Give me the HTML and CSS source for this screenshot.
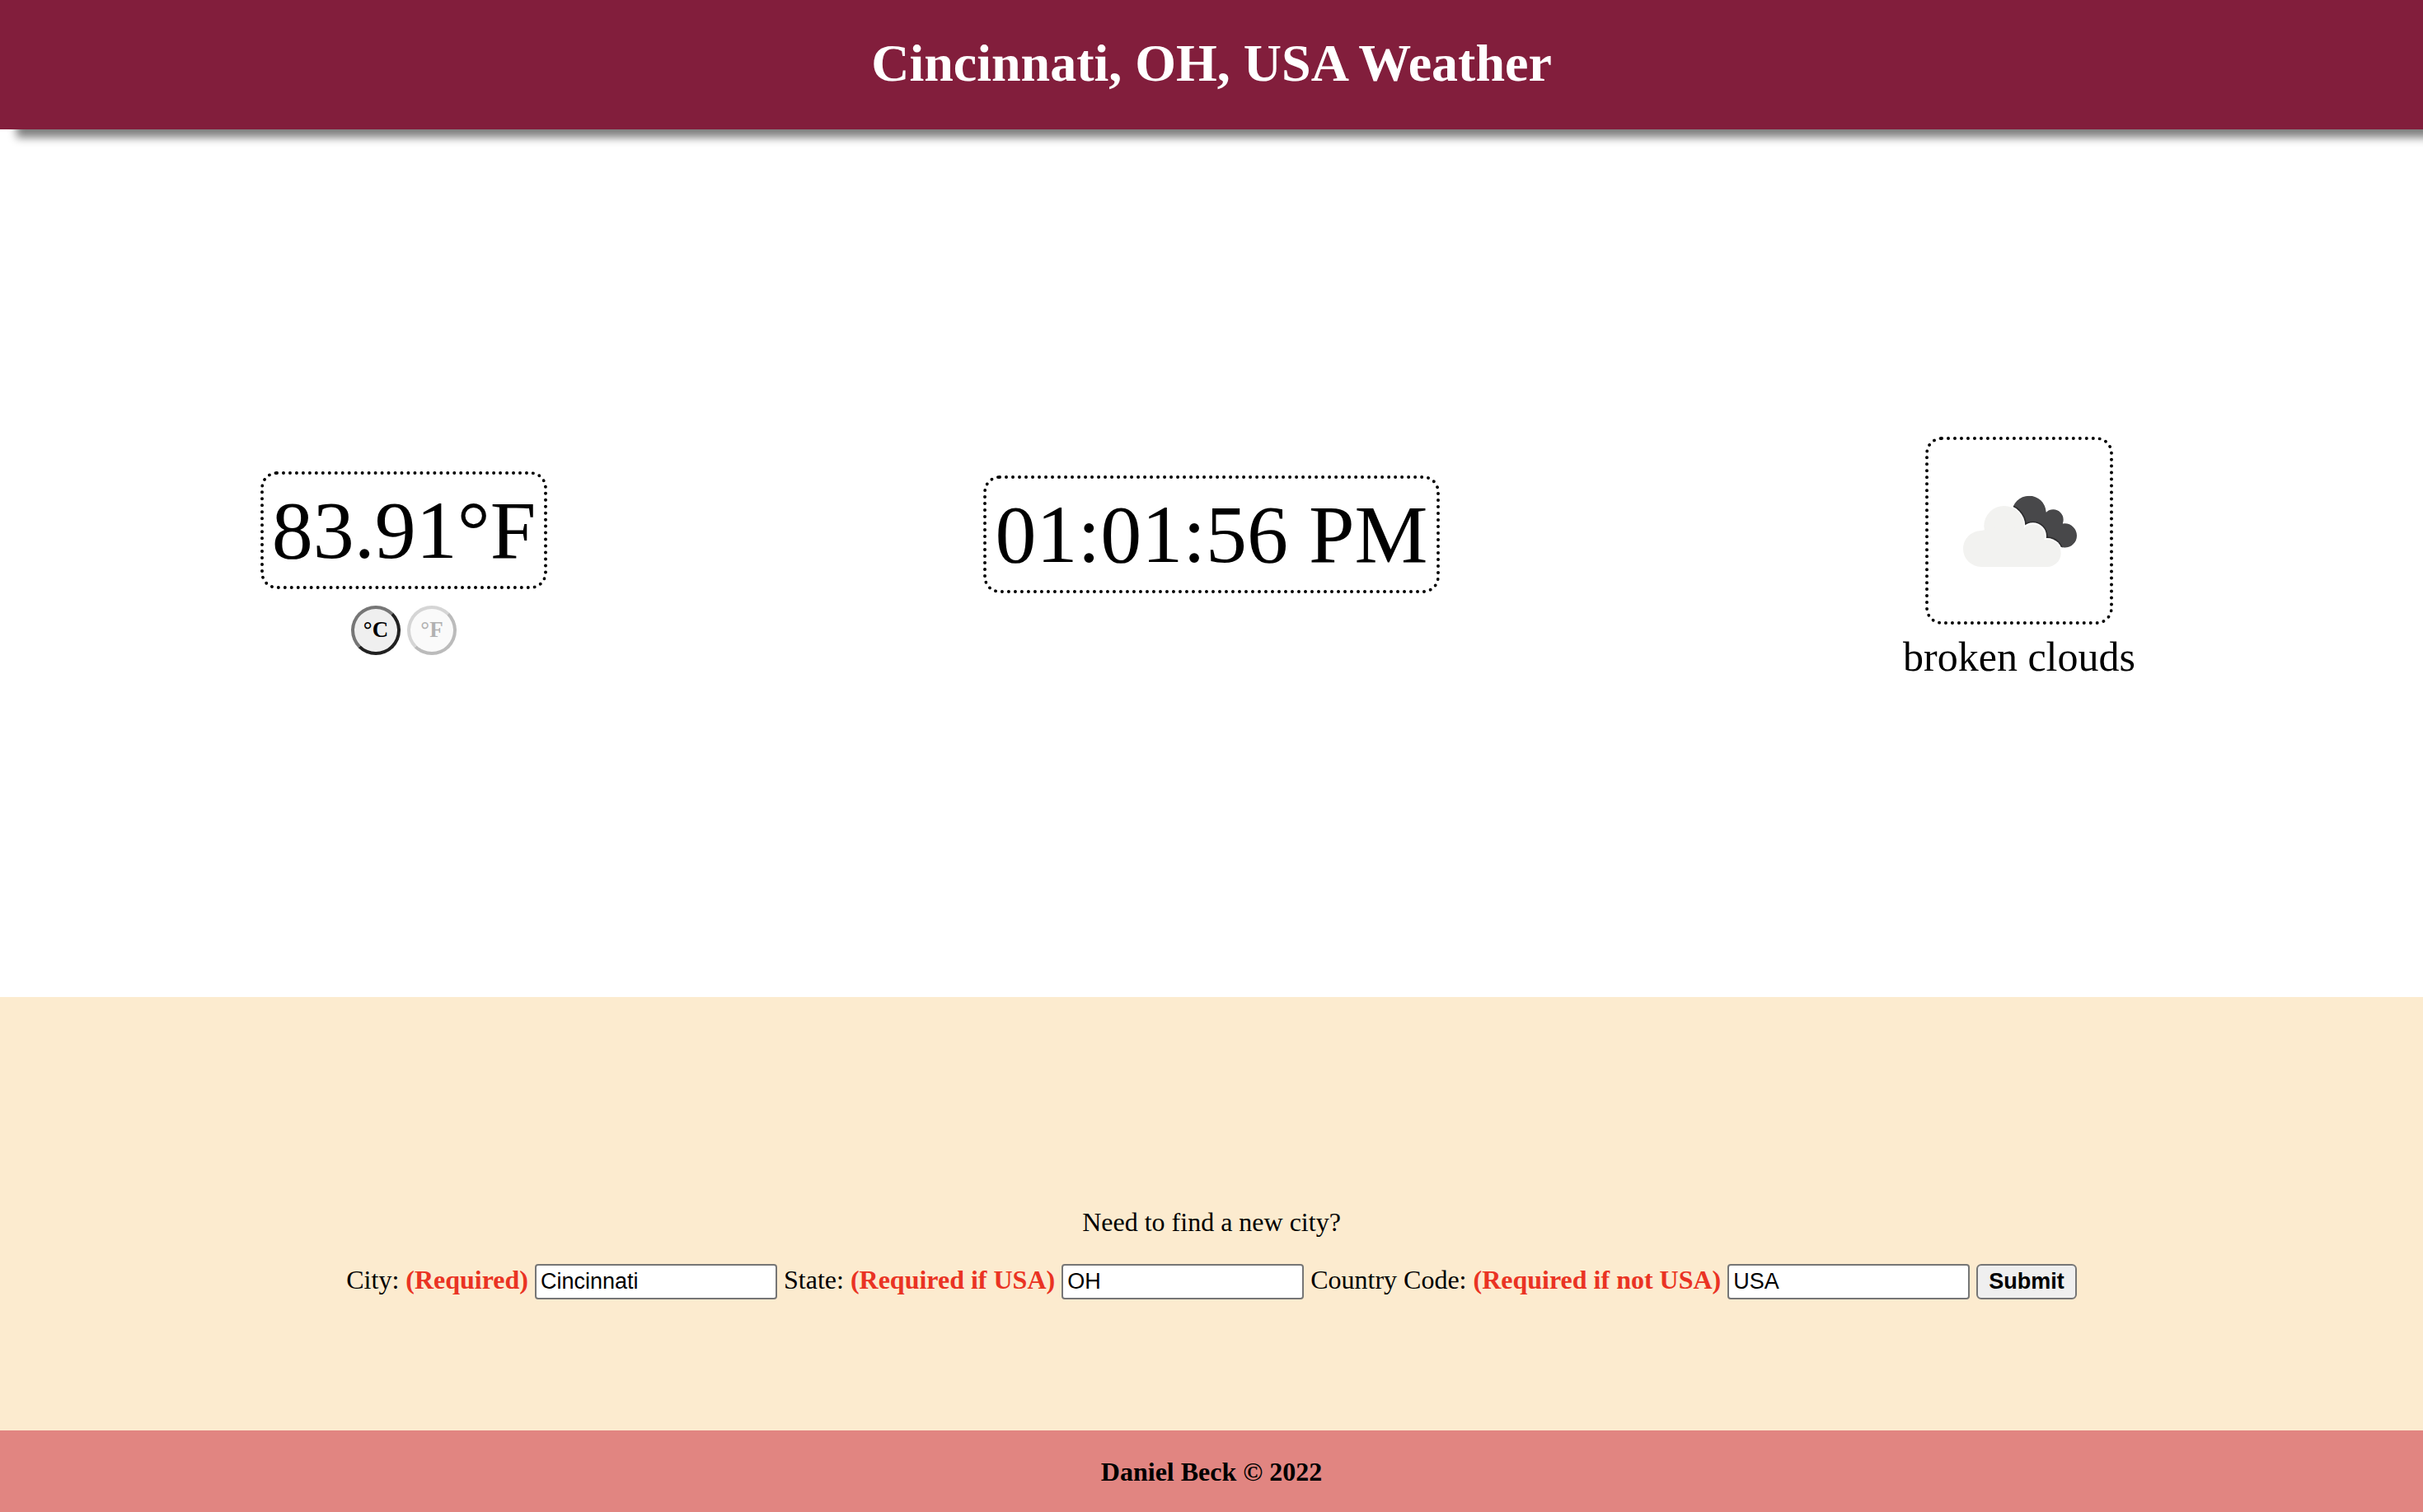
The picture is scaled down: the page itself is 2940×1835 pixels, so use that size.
FILE: index.html
```
<!DOCTYPE html>
<html lang="en">
<head>
<meta charset="utf-8">
<title>Cincinnati, OH, USA Weather</title>
<link rel="stylesheet" href="styles.css">
</head>
<body>
<header class="header">
  <h1 class="title">Cincinnati, OH, USA Weather</h1>
</header>
<main class="weather">
  <section class="panel">
    <div class="reading">83.91°F</div>
    <div class="units">
      <button class="unit" type="button">°C</button>
      <button class="unit" type="button" disabled>°F</button>
    </div>
  </section>
  <section class="panel panel-clock">
    <div class="reading">01:01:56 PM</div>
  </section>
  <section class="panel">
    <div class="reading">
      <svg class="icon" viewBox="0 0 600 600" role="img" aria-label="broken clouds">
        <defs>
          <clipPath id="back-cloud">
            <circle cx="336" cy="235" r="62"/>
            <circle cx="424" cy="260" r="37"/>
            <circle cx="466" cy="318" r="44"/>
            <path d="M336 235L398 232L424 260L462 275L466 362L390 345L320 290Z"/>
          </clipPath>
        </defs>
        <g clip-path="url(#back-cloud)">
          <rect width="600" height="600" fill="#48484a"/>
          <g fill="#2c2c2e">
            <circle cx="245" cy="283" r="82"/>
            <circle cx="350" cy="320" r="54"/>
            <circle cx="402" cy="382" r="60"/>
          </g>
        </g>
        <g fill="#fff">
          <circle cx="245" cy="283" r="77"/>
          <circle cx="350" cy="320" r="49"/>
          <circle cx="402" cy="382" r="55"/>
        </g>
        <g fill="#f2f2f0">
          <circle cx="245" cy="283" r="73"/>
          <circle cx="162" cy="366" r="66"/>
          <circle cx="350" cy="320" r="43"/>
          <circle cx="402" cy="382" r="50"/>
          <path d="M162 300L245 283L350 300L402 350V432H162Z"/>
        </g>
      </svg>
    </div>
    <p class="description">broken clouds</p>
  </section>
</main>
<section class="search">
  <p class="prompt">Need to find a new city?</p>
  <form class="form">
    <label for="city">City: <strong class="required">(Required)</strong></label>
    <input class="field" id="city" type="text" value="Cincinnati">
    <label for="state">State: <strong class="required">(Required if USA)</strong></label>
    <input class="field" id="state" type="text" value="OH">
    <label for="country">Country Code: <strong class="required">(Required if not USA)</strong></label>
    <input class="field" id="country" type="text" value="USA">
    <button class="submit" type="submit">Submit</button>
  </form>
</section>
<footer class="footer">Daniel Beck © 2022</footer>
</body>
</html>
```
FILE: styles.css
```
* {
  box-sizing: border-box;
}

body {
  display: grid;
  grid-template-rows: auto 2fr 1fr auto;
  min-height: 100vh;
  margin: 0;
  background: #fff;
  color: #000;
  font-family: "Liberation Serif", "Times New Roman", serif;
  font-size: 32px;
  text-align: center;
}

.header {
  padding: 40px 0 43px;
  background: #821e3c;
  box-shadow: 20px 10px 10px #808080;
  color: #fff;
}

.title {
  margin: 0;
  font-size: 64px;
  line-height: 74px;
}

.weather {
  display: grid;
  grid-template-columns: repeat(3, 1fr);
  align-items: center;
}

.panel {
  display: flex;
  flex-direction: column;
  align-items: center;
}

.panel-clock {
  padding-bottom: 70px;
}

.reading {
  padding: 10px;
  border: 4px dotted #000;
  border-radius: 20px;
  font-size: 100px;
}

.icon {
  display: block;
  width: 200px;
  height: 200px;
}

.units {
  display: flex;
  gap: 8px;
  margin-top: 20px;
}

.unit {
  width: 60px;
  height: 60px;
  padding: 0;
  border: 4px solid;
  border-color: #767676 #212121 #212121 #767676;
  border-radius: 50%;
  background: #efefef;
  color: #000;
  font: bold 27px "Liberation Serif", "Times New Roman", serif;
}

.unit:disabled {
  opacity: 0.3;
}

.description {
  margin: 10px 0;
  font-size: 50px;
}

.search {
  display: flex;
  flex-direction: column;
  justify-content: center;
  padding-top: 96px;
  background: #fcebcf;
}

.prompt {
  margin: 0 0 32px;
}

.form {
  display: flex;
  flex-wrap: wrap;
  justify-content: center;
  align-items: baseline;
  gap: 8px;
}

.required {
  color: #ea3323;
}

.field,
.submit {
  border: 2px solid #767676;
  font-family: "Liberation Sans", Arial, sans-serif;
  font-size: 27px;
}

.field {
  width: 294px;
  padding: 4px 5px;
  border-radius: 4px;
  background: #fff;
  color: #000;
}

.submit {
  padding: 4px 13px;
  border-radius: 6px;
  background: #efefef;
  color: #000;
  font-weight: bold;
}

.footer {
  padding: 32px 0 30px;
  background: #e18581;
  font-weight: bold;
}
```
